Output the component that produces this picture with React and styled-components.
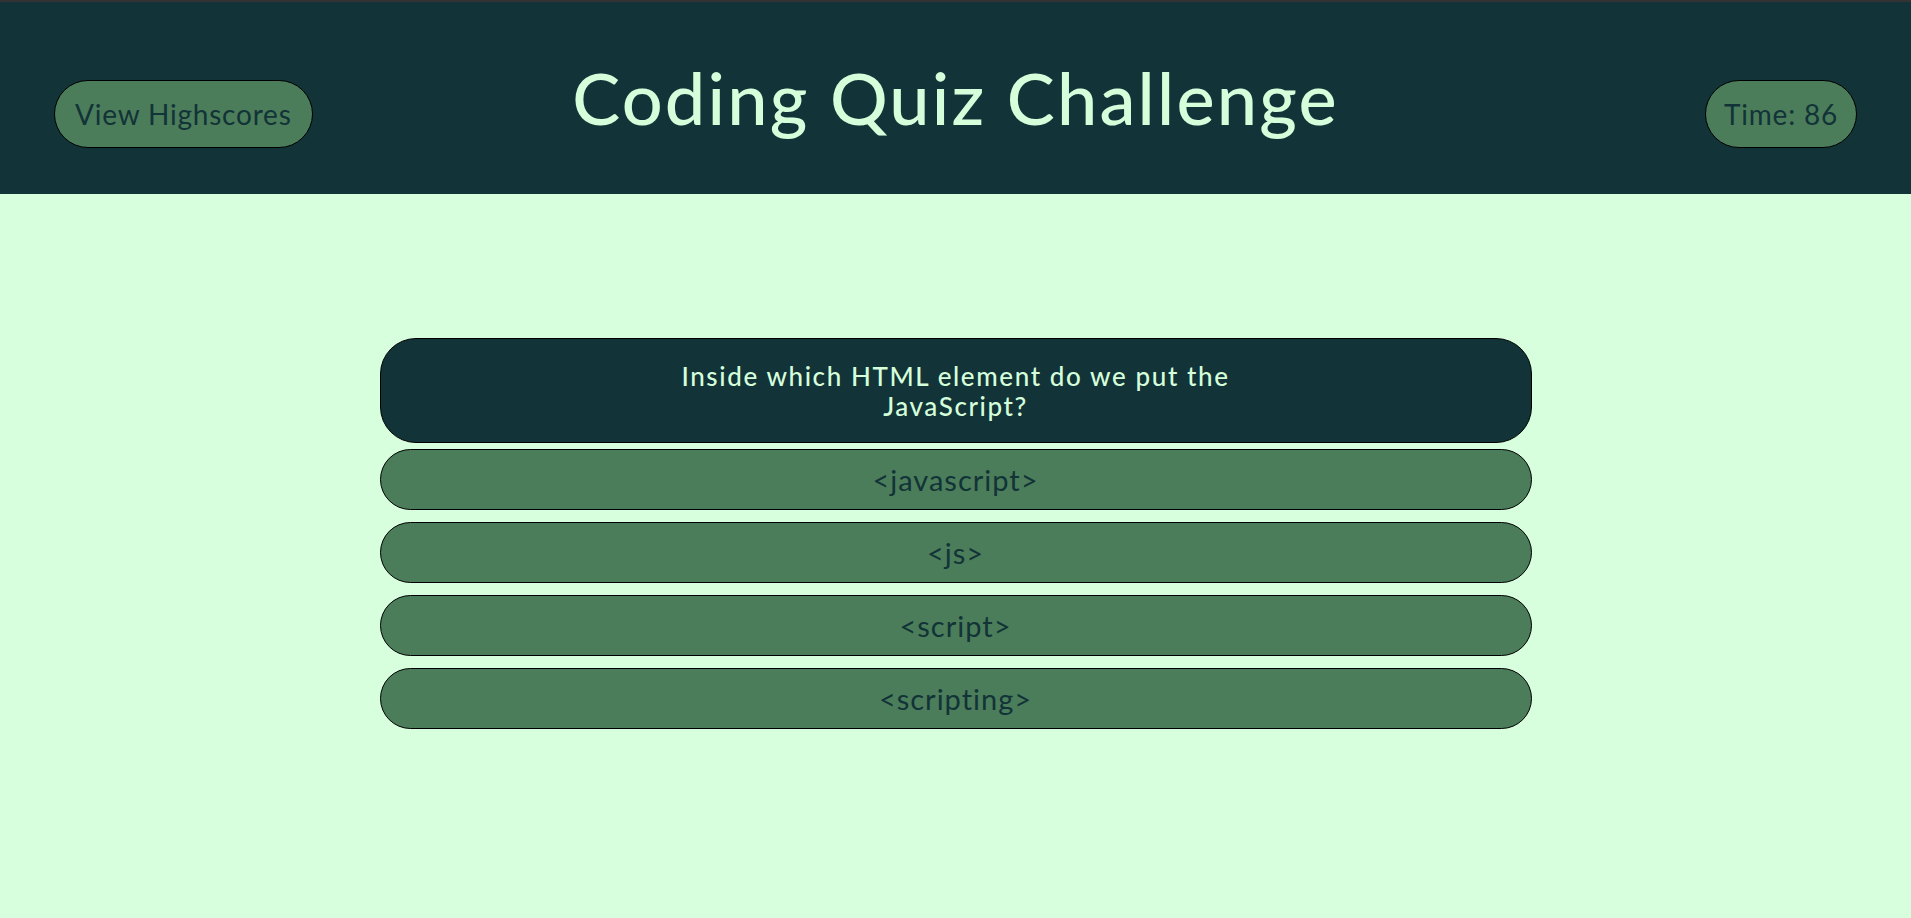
import React from "react";
import styled, { createGlobalStyle } from "styled-components";

const Global = createGlobalStyle`
  html, body { margin: 0; padding: 0; }
  body {
    background: #d7ffdd;
    font-family: Lato, "Noto Sans", sans-serif;
    min-height: 100vh;
  }
`;

const Header = styled.header`
  box-sizing: border-box;
  height: 194px;
  background: #123337;
  border-top: 2px solid #333333;
  display: grid;
  grid-template-columns: 1fr auto 1fr;
  align-items: center;
  padding: 0 54px;
`;

const PillButton = styled.button`
  box-sizing: border-box;
  justify-self: ${(p) => (p.$end ? "end" : "start")};
  height: 68px;
  margin-top: 32px;
  padding: 0 ${(p) => p.$pad || 20}px;
  background: #4b7d5a;
  border: 1px solid #000;
  border-radius: 34px;
  color: #123337;
  font-family: inherit;
  font-size: 28px;
  letter-spacing: 0.8px;
  cursor: pointer;
`;

const Title = styled.h1`
  margin: 0 0 2px;
  color: #d5fedb;
  font-size: 72px;
  font-weight: 500;
  letter-spacing: 2.2px;
`;

const Main = styled.main`
  display: flex;
  flex-direction: column;
  align-items: center;
  padding-top: 144px;
`;

const QuestionCard = styled.div`
  box-sizing: border-box;
  width: 1152px;
  height: 105px;
  background: #123337;
  border: 1px solid #000;
  border-radius: 36px;
  display: flex;
  align-items: center;
  justify-content: center;
  text-align: center;
  color: #d5fedb;
  font-size: 26px;
  font-weight: 500;
  letter-spacing: 1.6px;
  line-height: 30px;
`;

const AnswerList = styled.div`
  display: flex;
  flex-direction: column;
  gap: 12px;
  margin-top: 6px;
`;

const Answer = styled.button`
  box-sizing: border-box;
  width: 1152px;
  height: 61px;
  background: #4b7d5a;
  border: 1px solid #000;
  border-radius: 31px;
  color: #123337;
  font-family: inherit;
  font-size: 29px;
  letter-spacing: 1px;
  cursor: pointer;
`;

const answers = ["<javascript>", "<js>", "<script>", "<scripting>"];

export default function App() {
  return (
    <>
      <Global />
      <Header>
        <PillButton>View Highscores</PillButton>
        <Title>Coding Quiz Challenge</Title>
        <PillButton $end $pad={18}>Time: 86</PillButton>
      </Header>
      <Main>
        <QuestionCard>
          <div>
            Inside which HTML element do we put the
            <br />
            JavaScript?
          </div>
        </QuestionCard>
        <AnswerList>
          {answers.map((a) => (
            <Answer key={a}>{a}</Answer>
          ))}
        </AnswerList>
      </Main>
    </>
  );
}
